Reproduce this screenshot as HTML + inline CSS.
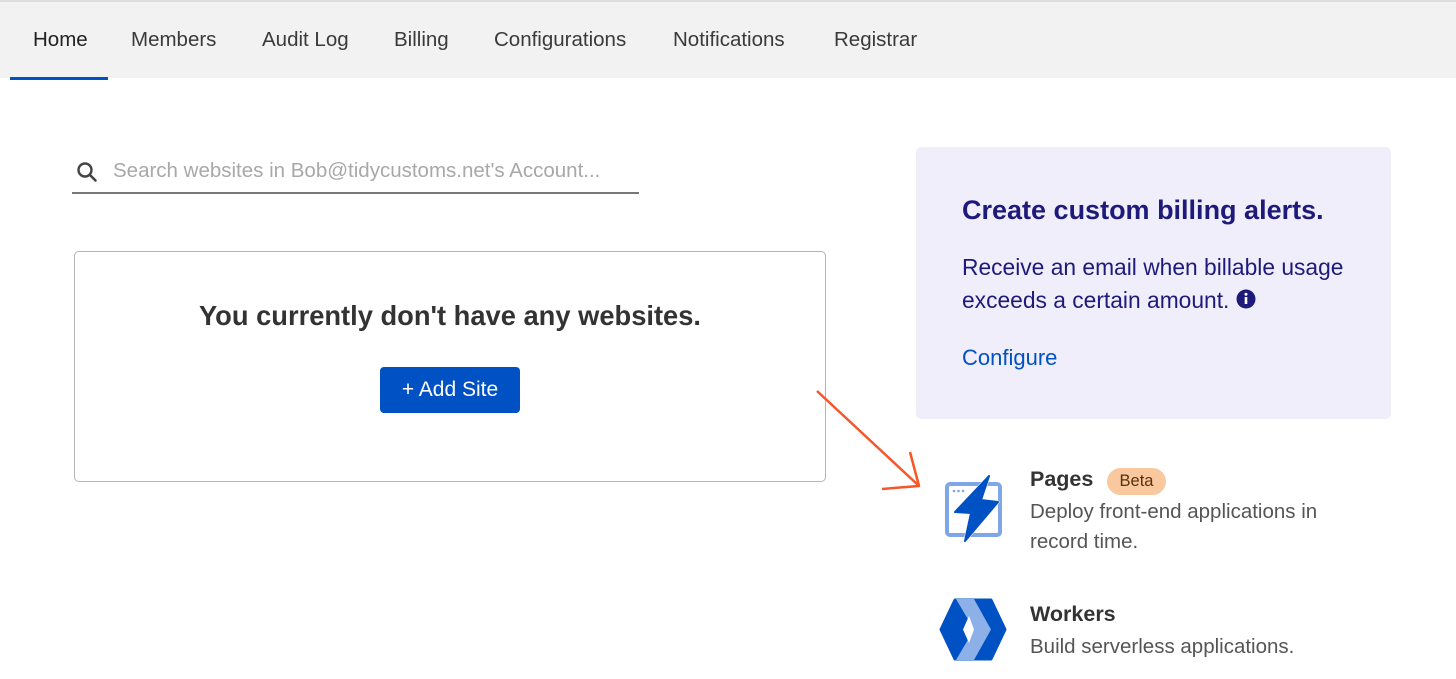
<!DOCTYPE html>
<html><head><meta charset="utf-8"><style>
*{margin:0;padding:0;box-sizing:border-box}
body{width:1456px;height:679px;overflow:hidden;background:#fff;font-family:"Liberation Sans",sans-serif;color:#333;position:relative}
.nav{position:absolute;left:0;top:0;width:1456px;height:78px;background:#f2f2f2;border-top:2px solid #ddd}
.nav span{position:absolute;top:26px;font-size:20.5px;color:#3a3a3a}
.ul{position:absolute;left:10px;top:75px;width:98px;height:3px;background:#0051c3}
.a{position:absolute}
</style></head><body>
<div class="nav">
<span style="left:33px;color:#222">Home</span>
<span style="left:131px">Members</span>
<span style="left:262px">Audit Log</span>
<span style="left:394px">Billing</span>
<span style="left:494px">Configurations</span>
<span style="left:673px">Notifications</span>
<span style="left:834px">Registrar</span>
<div class="ul"></div>
</div>
<svg class="a" style="left:76px;top:161px" width="22" height="22" viewBox="0 0 22 22"><circle cx="9" cy="9" r="6.5" fill="none" stroke="#444" stroke-width="2.4"/><line x1="14" y1="14" x2="19.5" y2="19.5" stroke="#444" stroke-width="2.6" stroke-linecap="round"/></svg>
<div class="a" style="left:113px;top:159px;font-size:20.5px;color:#a8a8a8">Search websites in Bob@tidycustoms.net's Account...</div>
<div class="a" style="left:72px;top:192px;width:567px;height:2px;background:#777"></div>
<div class="a" style="left:74px;top:251px;width:752px;height:231px;border:1.5px solid #b5b5b5;border-radius:5px"></div>
<div class="a" style="left:74px;top:300px;width:752px;text-align:center;font-size:27.3px;font-weight:bold;color:#333">You currently don't have any websites.</div>
<div class="a" style="left:380px;top:367px;width:140px;height:46px;background:#0051c3;border-radius:4px;color:#fff;font-size:21px;text-align:center;line-height:46px">+ Add Site</div>
<div class="a" style="left:916px;top:147px;width:475px;height:272px;background:#f0eefb;border-radius:5px"></div>
<div class="a" style="left:962px;top:195px;font-size:27px;font-weight:bold;color:#1e1a7a">Create custom billing alerts.</div>
<div class="a" style="left:962px;top:251px;font-size:22.8px;line-height:33px;color:#1e1a7a;width:430px">Receive an email when billable usage<br>exceeds a certain amount. <svg width="20" height="20" viewBox="0 0 20 20" style="vertical-align:-1px"><circle cx="10" cy="10" r="9.5" fill="#1e1a7a"/><rect x="8.7" y="8" width="2.6" height="7" fill="#fff"/><circle cx="10" cy="5.3" r="1.5" fill="#fff"/></svg></div>
<div class="a" style="left:962px;top:345px;font-size:22px;color:#0051c3">Configure</div>
<svg class="a" style="left:810px;top:385px" width="120" height="110" viewBox="0 0 120 110"><path d="M7 6 L108 100" stroke="#f6562a" stroke-width="2.5" fill="none"/><path d="M100 67 L109 101 L72 104" stroke="#f6562a" stroke-width="2.5" fill="none" stroke-linejoin="round"/></svg>
<svg class="a" style="left:944px;top:474px" width="60" height="70" viewBox="0 0 60 70"><rect x="3" y="10" width="53" height="51" rx="3" fill="none" stroke="#7fa6e6" stroke-width="4"/><circle cx="10" cy="17" r="1.3" fill="#7fa6e6"/><circle cx="14.5" cy="17" r="1.3" fill="#7fa6e6"/><circle cx="19" cy="17" r="1.3" fill="#7fa6e6"/><path d="M45 2 L11 38 L27 39 L21 67 L54 28 L37 26 Z" fill="#0051c3" stroke="#fff" stroke-width="3" stroke-linejoin="round"/><path d="M45 2 L11 38 L27 39 L21 67 L54 28 L37 26 Z" fill="#0051c3" stroke="#0051c3" stroke-width="2" stroke-linejoin="round"/></svg>
<div class="a" style="left:1030px;top:467px;font-size:21.5px;font-weight:bold;color:#333">Pages</div>
<div class="a" style="left:1107px;top:468px;width:59px;height:27px;background:#f9c89e;border-radius:14px;font-size:16.5px;color:#5a3010;text-align:center;line-height:27px">Beta</div>
<div class="a" style="left:1030px;top:497px;font-size:20.5px;line-height:30px;color:#555">Deploy front-end applications in<br>record time.</div>
<svg class="a" style="left:938px;top:598px" width="70" height="63" viewBox="0 0 70 63"><path d="M17 2 H53 L67 31.5 L53 61 H17 L3 31.5 Z" fill="#0051c3" stroke="#0051c3" stroke-width="3" stroke-linejoin="round"/><path d="M18 1 H36 L53 31.5 L36 62 H18 L36 31.5 Z" fill="#8db0e8"/><path d="M25 31.5 L31 18 L36 31.5 L31 45 Z" fill="#fff"/></svg>
<div class="a" style="left:1030px;top:602px;font-size:21.5px;font-weight:bold;color:#333">Workers</div>
<div class="a" style="left:1030px;top:635px;font-size:20.5px;color:#555">Build serverless applications.</div>
</body></html>
